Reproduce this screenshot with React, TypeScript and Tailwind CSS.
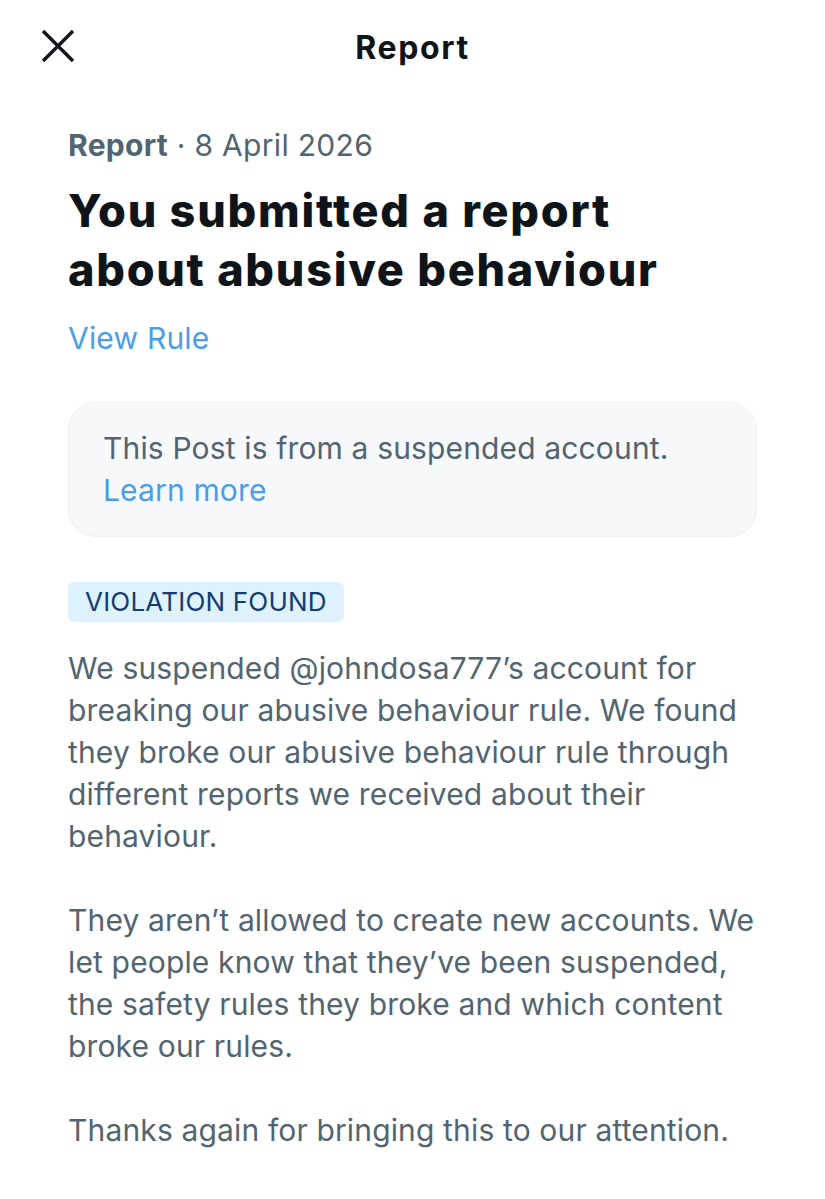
const CloseIcon = () => (
  <svg width="34" height="34" viewBox="0 0 34 34" fill="none">
    <path d="M2 2L32 32M32 2L2 32" stroke="#0f1419" strokeWidth="3.4" />
  </svg>
);

const App = () => {
  return (
    <div className="min-h-screen bg-white font-['Inter',sans-serif]">
      <div className="relative flex items-center justify-center h-[96px]">
        <button className="absolute left-[41px] top-[29px]">
          <CloseIcon />
        </button>
        <h1 className="text-[32px] leading-[40px] font-bold text-[#0f1419] tracking-[1.6px]">Report</h1>
      </div>

      <div className="px-[68px] pt-[29px]">
        <p className="text-[30px] leading-[40px] text-[#536471] tracking-[0.3px]">
          <span className="font-bold">Report</span> · 8 April 2026
        </p>
        <h2 className="mt-[16px] text-[45px] leading-[59px] font-extrabold text-[#0f1419] tracking-[1.75px]">
          You submitted a report about abusive behaviour
        </h2>
        <a className="block mt-[19px] text-[30px] leading-[40px] text-[#4a9de9] tracking-[0.2px]">View Rule</a>

        <div className="mt-[44px] rounded-[28px] bg-[#f7f8f9] border border-[#eceef0] pl-[34px] pr-[20px] pt-[24px] pb-[25px]">
          <p className="text-[30px] leading-[42px] text-[#536471] tracking-[0.15px]">
            This Post is from a suspended account.
          </p>
          <a className="block text-[30px] leading-[42px] text-[#4a9de9] tracking-[0.15px]">Learn more</a>
        </div>

        <div className="mt-[45px] inline-block rounded-[6px] bg-[#ddf2fd] px-[17px] text-[26px] leading-[40px] text-[#133c72] tracking-[0.2px]">
          VIOLATION FOUND
        </div>

        <div className="mt-[25px] -mr-[10px] text-[30px] leading-[42px] text-[#536471] tracking-[0.15px] flex flex-col gap-[42px]">
          <p>
            We suspended @johndosa777’s account for breaking our abusive behaviour rule. We found they broke our abusive behaviour rule through different reports we received about their behaviour.
          </p>
          <p>
            They aren’t allowed to create new accounts. We let people know that they’ve been suspended, the safety rules they broke and which content broke our rules.
          </p>
          <p>Thanks again for bringing this to our attention.</p>
        </div>
      </div>
    </div>
  );
};

export default App;
